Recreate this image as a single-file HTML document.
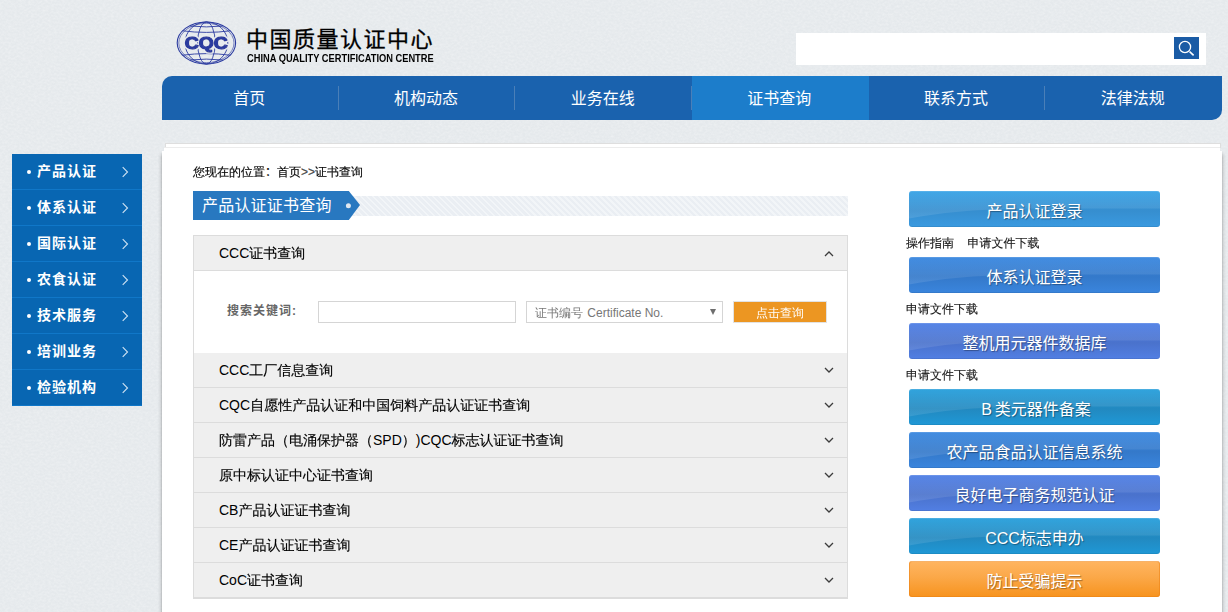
<!DOCTYPE html>
<html lang="zh-CN">
<head>
<meta charset="utf-8">
<title>证书查询 - 中国质量认证中心</title>
<style>
*{box-sizing:border-box;margin:0;padding:0}
html,body{width:1228px;height:612px;overflow:hidden}
body{position:relative;background:#e5e9ec;font-family:"Liberation Sans","Noto Sans CJK SC",sans-serif;color:#000;font-size:12px;text-spacing-trim:space-all}
a{color:inherit;text-decoration:none}
ul{list-style:none}
.wq{font-family:"Liberation Sans","WenQuanYi Zen Hei","Noto Sans CJK SC",sans-serif}
.nt{font-family:"Liberation Sans","Noto Sans CJK SC",sans-serif}
/* header */
#logo{position:absolute;left:170px;top:14px;width:80px;height:60px}
#cn{position:absolute;left:246px;top:24px;height:32px;line-height:32px;font-size:22px;font-weight:400;-webkit-text-stroke:.3px #000;color:#000;white-space:nowrap;letter-spacing:1.500px}
#en{position:absolute;left:247px;top:51.500px;height:13px;line-height:13px;font-size:10.200px;font-weight:bold;color:#000;white-space:nowrap;transform-origin:0 50%;transform:scaleX(.912)}
#search{position:absolute;left:796px;top:33px;width:410px;height:32px;background:#fff}
#sbtn{position:absolute;left:1174px;top:37px;width:25px;height:22px;background:#1a5ba5}
/* nav */
#nav{position:absolute;left:162px;top:76px;width:1060px;height:44px;background:#1a62ae;border-radius:10px 0 10px 0;overflow:hidden;display:flex}
#nav li{flex:1 1 0;height:44px;line-height:46px;padding-right:2px;text-align:center;color:#fff;font-size:16px;position:relative}
#nav li:after{content:"";position:absolute;right:0;top:10px;width:1px;height:24px;background:#4a7fb8}
#nav li.on{background:#1c7dcb}
#nav li.on:after,#nav li:last-child:after{display:none}
/* side */
#side{position:absolute;left:12px;top:154px;width:130px;background:#0866b2}
#side li{height:36px;line-height:35px;letter-spacing:1px;border-bottom:1px solid #1077c8;color:#fff;font-size:14px;font-weight:bold;position:relative;padding-left:25px}
#side li:before{content:"";position:absolute;left:15px;top:16px;width:4px;height:4px;border-radius:50%;background:#fff}
#side li svg{position:absolute;left:109px;top:12px}
/* panel */
#panel{position:absolute;left:162px;top:148px;width:1060px;height:470px;background:#fff;clip-path:polygon(2px 0,1058px 0,1058px 3px,1060px 3px,1060px 100%,0 100%,0 3px,2px 3px)}
#shl{position:absolute;left:158px;top:151px;width:4px;height:470px;background:linear-gradient(90deg,rgba(0,0,0,.015) 0,rgba(0,0,0,.015) 25%,rgba(0,0,0,.04) 25%,rgba(0,0,0,.04) 50%,rgba(0,0,0,.08) 50%,rgba(0,0,0,.08) 75%,rgba(0,0,0,.16) 75%);-webkit-mask-image:linear-gradient(180deg,transparent,#000 6px);mask-image:linear-gradient(180deg,transparent,#000 6px)}
#shr{position:absolute;left:1222px;top:151px;width:4px;height:470px;background:linear-gradient(270deg,rgba(0,0,0,.015) 0,rgba(0,0,0,.015) 25%,rgba(0,0,0,.04) 25%,rgba(0,0,0,.04) 50%,rgba(0,0,0,.08) 50%,rgba(0,0,0,.08) 75%,rgba(0,0,0,.16) 75%);-webkit-mask-image:linear-gradient(180deg,transparent,#000 6px);mask-image:linear-gradient(180deg,transparent,#000 6px)}
#pline{position:absolute;left:164px;top:147px;width:1056px;height:1px;background:#ececec}
#ptop{position:absolute;left:165px;top:143px;width:1056px;height:5px;background:#fff;border:1px solid #dedede;border-bottom:0}
#crumb{position:absolute;left:193px;top:163px;height:18px;line-height:18px;font-size:12px;white-space:nowrap}
#ttl{position:absolute;left:193px;top:191px;width:167px;height:29px}
#stripe{position:absolute;left:352px;top:196px;width:496px;height:20px;background:repeating-linear-gradient(45deg,#eaeef3 0,#eaeef3 2.200px,#f2f5f8 2.200px,#f2f5f8 4.240px)}
#ttl span{letter-spacing:.2px;position:absolute;left:9px;top:0;line-height:30px;font-size:16px;color:#fff;white-space:nowrap}
/* accordion */
#acc{position:absolute;left:193px;top:235px;width:655px;height:364px;border:1px solid #dcdcdc;background:#fff}
.ah{position:absolute;left:0;width:653px;height:35px;background:#efefef;border-bottom:1px solid #dcdcdc;line-height:34px;padding-left:25px;font-size:14px;color:#000}
.ah{-webkit-text-stroke:.15px #000}
#crumb,.lnk{-webkit-text-stroke:.15px #111}
.ah span{-webkit-text-stroke:0}
.ah svg{position:absolute;right:13px;top:13px}
.ah svg.up{top:14px}
#form{position:absolute;left:0;top:35px;width:653px;height:82px}
#lbl{position:absolute;left:33px;top:32px;font-size:12px;font-weight:bold;color:#666;line-height:16px;letter-spacing:1px;white-space:nowrap}
#inp{position:absolute;left:124px;top:30px;width:198px;height:22px;border:1px solid #d5d5d5;background:#fff}
#sel{position:absolute;left:332px;top:30px;width:197px;height:22px;border:1px solid #d5d5d5;background:#fff;font-size:12px;color:#777;line-height:22px;padding-left:8px;white-space:nowrap}
#sel i{position:absolute;left:182.500px;top:7px;width:0;height:0;border-left:3.500px solid transparent;border-right:3.500px solid transparent;border-top:6.500px solid #6e6e6e}
#qbtn{position:absolute;left:539px;top:30px;width:94px;height:22px;background:#ec9622;border:1px solid #e2e2e2;color:#fff;font-size:12px;line-height:22px;text-align:center}
/* right */
.btn{position:absolute;left:909px;width:251px;height:36px;border-radius:3px;color:#fff;font-size:16px;line-height:41px;text-align:center;text-shadow:1px 1px 1px rgba(0,0,0,.35);overflow:hidden}
.btn:after{content:"";position:absolute;left:0;top:0;width:251px;height:36px;background:linear-gradient(rgba(255,255,255,.04),rgba(255,255,255,.13));clip-path:path("M0 0H251V17.500H110Q45 19 0 27.500Z")}
.btn:before{content:"";position:absolute;left:0;top:0;width:251px;height:36px;border-radius:3px;box-shadow:inset 0 1px 0 rgba(255,255,255,.12),inset 0 -1px 0 rgba(0,0,0,.08)}
.b1{background:linear-gradient(#38a3e6,#368ecf 55%,#3a9ae0)}
.b2{background:linear-gradient(#3a88e0,#3479ca 55%,#3a85dd)}
.b3{background:linear-gradient(#5080e6,#4a72cc 55%,#527fe3)}
.b4{background:linear-gradient(#28a0dc,#2289c0 55%,#1f98d6)}
.b5{background:linear-gradient(#ffb561,#fba848 45%,#f7931e);box-shadow:inset 0 0 0 1px rgba(235,130,20,.55)}
.b5:after{display:none}
.b5:before{box-shadow:inset 0 2px 0 -1px rgba(255,255,255,.25)}
.lnk{position:absolute;left:906px;font-size:12px;line-height:16px;white-space:nowrap;color:#222}
</style>
</head>
<body>
<svg id="tex" width="1228" height="612" style="position:absolute;left:0;top:0"><filter id="nz" x="0" y="0" width="100%" height="100%"><feTurbulence type="fractalNoise" baseFrequency="0.35 0.5" numOctaves="2" seed="7"/><feColorMatrix type="matrix" values="0 0 0 0 1  0 0 0 0 1  0 0 0 0 1  1.600 0 0 0 -0.550"/></filter><rect width="1228" height="612" filter="url(#nz)" opacity="0.350"/></svg>
<svg id="logo" viewBox="0 0 80 60">
<g fill="none" stroke="#2b3ba0" stroke-width="0.9">
<ellipse cx="36.400" cy="29" rx="29.200" ry="21" stroke-width="1.100"/>
<ellipse cx="36.400" cy="29" rx="27.600" ry="19.600" stroke-width="0.600"/>
<ellipse cx="36.400" cy="29" rx="21.400" ry="21"/>
<ellipse cx="36.400" cy="29" rx="8.800" ry="21"/>
<path d="M20 12Q36.400 13.800 52.800 12M12.500 16.800Q36.400 20 60.300 16.800M12.500 41.200Q36.400 38 60.300 41.200M20 46Q36.400 44.200 52.800 46"/>
</g>
<filter id="halo" x="-10%" y="-30%" width="120%" height="160%"><feMorphology in="SourceAlpha" operator="dilate" radius="1.300" result="d"/><feFlood flood-color="#e8ecf0"/><feComposite in2="d" operator="in" result="h"/><feMerge><feMergeNode in="h"/><feMergeNode in="SourceGraphic"/></feMerge></filter>
<text x="14.800" y="35" font-family="'Liberation Sans',sans-serif" font-weight="bold" font-size="16.500" fill="#2b3ba0" stroke="#2b3ba0" stroke-width="1.300" stroke-linejoin="round" textLength="43" lengthAdjust="spacingAndGlyphs" filter="url(#halo)">CQC</text>
</svg>
<div id="cn">中国质量认证中心</div>
<div id="en">CHINA QUALITY CERTIFICATION CENTRE</div>
<div id="search"></div>
<div id="sbtn"><svg width="25" height="22" viewBox="0 0 25 22"><circle cx="11" cy="10" r="5.6" fill="none" stroke="#fff" stroke-width="1.3"/><path d="M15.6 14.6L19.6 18.4" stroke="#fff" stroke-width="1.6"/></svg></div>

<ul id="nav">
<li>首页</li><li>机构动态</li><li>业务在线</li><li class="on">证书查询</li><li>联系方式</li><li>法律法规</li>
</ul>

<ul id="side">
<li>产品认证<svg width="8" height="12" viewBox="0 0 8 12"><path d="M1.7 1.2L6.5 6L1.7 10.800" fill="none" stroke="#cfe2f3" stroke-width="1.1"/></svg></li>
<li>体系认证<svg width="8" height="12" viewBox="0 0 8 12"><path d="M1.7 1.2L6.5 6L1.7 10.800" fill="none" stroke="#cfe2f3" stroke-width="1.1"/></svg></li>
<li>国际认证<svg width="8" height="12" viewBox="0 0 8 12"><path d="M1.7 1.2L6.5 6L1.7 10.800" fill="none" stroke="#cfe2f3" stroke-width="1.1"/></svg></li>
<li>农食认证<svg width="8" height="12" viewBox="0 0 8 12"><path d="M1.7 1.2L6.5 6L1.7 10.800" fill="none" stroke="#cfe2f3" stroke-width="1.1"/></svg></li>
<li>技术服务<svg width="8" height="12" viewBox="0 0 8 12"><path d="M1.7 1.2L6.5 6L1.7 10.800" fill="none" stroke="#cfe2f3" stroke-width="1.1"/></svg></li>
<li>培训业务<svg width="8" height="12" viewBox="0 0 8 12"><path d="M1.7 1.2L6.5 6L1.7 10.800" fill="none" stroke="#cfe2f3" stroke-width="1.1"/></svg></li>
<li>检验机构<svg width="8" height="12" viewBox="0 0 8 12"><path d="M1.7 1.2L6.5 6L1.7 10.800" fill="none" stroke="#cfe2f3" stroke-width="1.1"/></svg></li>
</ul>

<div id="ptop"></div>
<div id="panel"></div><div id="pline"></div><div id="shl"></div><div id="shr"></div>
<div id="crumb" class="wq">您现在的位置<span class="nt">：</span>首页<span style="color:#555">&gt;&gt;</span>证书查询</div>
<div id="stripe"></div>
<div id="ttl"><svg width="167" height="29" viewBox="0 0 167 29"><path d="M0 0H155.800L167 14L155.800 29H0Z" fill="#2878c0"/><circle cx="155.400" cy="14.700" r="2.500" fill="#dfe7f0"/></svg><span>产品认证证书查询</span></div>

<div id="acc" class="wq">
<div class="ah" style="top:0"><span>CCC</span>证书查询<svg class="up" width="10" height="8" viewBox="0 0 10 8"><path d="M1 6L5 2L9 6" fill="none" stroke="#3c3c3c" stroke-width="1.3"/></svg></div>
<div id="form">
<div id="lbl" class="nt">搜索关键词:</div>
<div id="inp"></div>
<div id="sel">证书编号<span style="margin-left:1px"> </span>Certificate No.<i></i></div>
<div id="qbtn">点击查询</div>
</div>
<div class="ah" style="top:117px"><span>CCC</span>工厂信息查询<svg width="10" height="8" viewBox="0 0 10 8"><path d="M1 2L5 6L9 2" fill="none" stroke="#3c3c3c" stroke-width="1.3"/></svg></div>
<div class="ah" style="top:152px"><span>CQC</span>自愿性产品认证和中国饲料产品认证证书查询<svg width="10" height="8" viewBox="0 0 10 8"><path d="M1 2L5 6L9 2" fill="none" stroke="#3c3c3c" stroke-width="1.3"/></svg></div>
<div class="ah" style="top:187px">防雷产品（电涌保护器（<span>SPD</span>）<span>)CQC</span>标志认证证书查询<svg width="10" height="8" viewBox="0 0 10 8"><path d="M1 2L5 6L9 2" fill="none" stroke="#3c3c3c" stroke-width="1.3"/></svg></div>
<div class="ah" style="top:222px">原中标认证中心证书查询<svg width="10" height="8" viewBox="0 0 10 8"><path d="M1 2L5 6L9 2" fill="none" stroke="#3c3c3c" stroke-width="1.3"/></svg></div>
<div class="ah" style="top:257px"><span>CB</span>产品认证证书查询<svg width="10" height="8" viewBox="0 0 10 8"><path d="M1 2L5 6L9 2" fill="none" stroke="#3c3c3c" stroke-width="1.3"/></svg></div>
<div class="ah" style="top:292px"><span>CE</span>产品认证证书查询<svg width="10" height="8" viewBox="0 0 10 8"><path d="M1 2L5 6L9 2" fill="none" stroke="#3c3c3c" stroke-width="1.3"/></svg></div>
<div class="ah" style="top:327px"><span>CoC</span>证书查询<svg width="10" height="8" viewBox="0 0 10 8"><path d="M1 2L5 6L9 2" fill="none" stroke="#3c3c3c" stroke-width="1.3"/></svg></div>
</div>

<div class="btn b1" style="top:191px">产品认证登录</div>
<div class="lnk wq" style="top:235px">操作指南<span style="margin-right:1.500px">　</span>申请文件下载</div>
<div class="btn b2" style="top:257px">体系认证登录</div>
<div class="lnk wq" style="top:301px">申请文件下载</div>
<div class="btn b3" style="top:323px">整机用元器件数据库</div>
<div class="lnk wq" style="top:367px">申请文件下载</div>
<div class="btn b4" style="top:389px;padding-left:3px">B<span style="margin-left:3px"></span>类元器件备案</div>
<div class="btn b2" style="top:432px">农产品食品认证信息系统</div>
<div class="btn b3" style="top:475px">良好电子商务规范认证</div>
<div class="btn b4" style="top:518px">CCC标志申办</div>
<div class="btn b5" style="top:561px">防止受骗提示</div>
</body>
</html>
